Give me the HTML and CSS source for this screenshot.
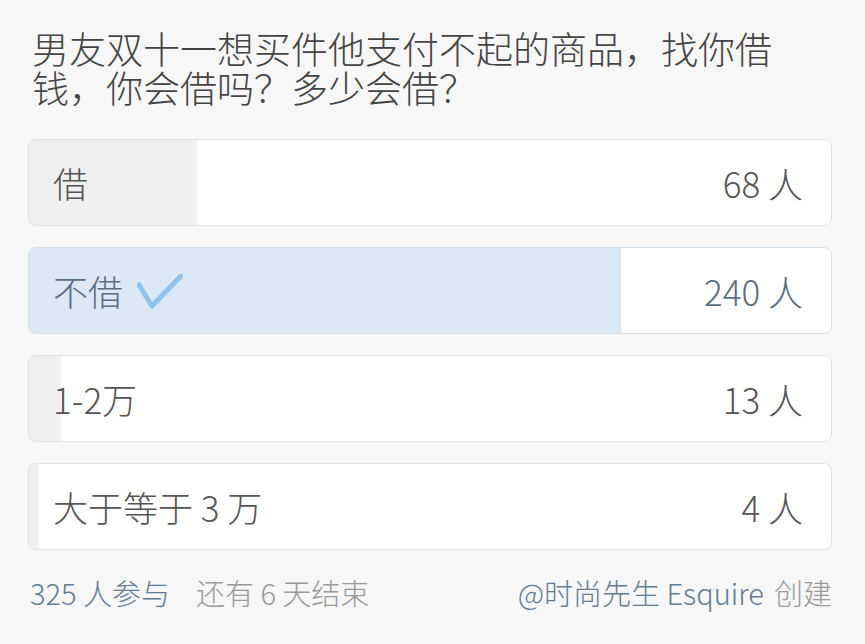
FILE: index.html
```html
<!DOCTYPE html>
<html lang="zh-CN">
  <head>
    <meta charset="UTF-8" />
    <meta name="viewport" content="width=device-width, initial-scale=1.0" />
    <title>投票</title>
    <link rel="stylesheet" href="styles.css">
  </head>
  <body>
    <div class="poll">
      <h1 class="poll-title">男友双十一想买件他支付不起的商品，找你借钱，你会借吗？多少会借？</h1>

      <div class="options">
        <div class="option" style="--pct: 20.9%">
          <span class="option-label">借</span>
          <span class="option-count">68 人</span>
        </div>
        <div class="option selected" style="--pct: 73.8%">
          <span class="option-label">不借
            <svg class="check" width="46" height="36" viewBox="0 0 46 36">
              <path d="M2 11 L15 32 L44 2" fill="none" stroke="#8fc2ee" stroke-width="5" stroke-linecap="round" stroke-linejoin="round" />
            </svg>
          </span>
          <span class="option-count">240 人</span>
        </div>
        <div class="option" style="--pct: 4%">
          <span class="option-label">1-2万</span>
          <span class="option-count">13 人</span>
        </div>
        <div class="option" style="--pct: 1.2%">
          <span class="option-label">大于等于 3 万</span>
          <span class="option-count">4 人</span>
        </div>
      </div>

      <div class="poll-footer">
        <div class="footer-left">
          <span class="blue">325 人参与</span>
          <span class="gray">还有 6 天结束</span>
        </div>
        <div class="footer-right">
          <span class="blue">@时尚先生 Esquire</span>
          <span class="gray">创建</span>
        </div>
      </div>
    </div>
  </body>
</html>
```

FILE: styles.css
```css
body {
  margin: 0;
  padding: 0;
  background-color: #f7f7f7;
  font-family: "Noto Sans CJK SC", "Noto Sans", sans-serif;
  font-weight: 300;
  color: #555;
}
.poll {
  width: 804px;
  margin-left: 28px;
  padding-top: 29px;
}
.poll-title {
  margin: 0 0 32px 4px;
  width: 760px;
  font-size: 37px;
  line-height: 39px;
  font-weight: 300;
  color: #444;
}
.options {
  display: flex;
  flex-direction: column;
  gap: 21px;
}
.option {
  --fill: #f0f0f0;
  box-sizing: border-box;
  height: 87px;
  display: flex;
  justify-content: space-between;
  align-items: center;
  padding: 0 28px 0 24px;
  border: 1px solid #e3e3e3;
  border-radius: 8px;
  background: linear-gradient(
    to right,
    var(--fill) var(--pct),
    #fff var(--pct)
  );
  font-size: 35px;
  color: #555;
}
.option.selected {
  --fill: #dce8f6;
  border-color: #d8e0e8;
  color: #5a6e82;
}
.option-label {
  display: flex;
  align-items: center;
  gap: 14px;
}
.check {
  margin-top: 2px;
}
.poll-footer {
  display: flex;
  justify-content: space-between;
  margin-top: 21px;
  font-size: 29px;
}
.footer-left,
.footer-right {
  display: flex;
  gap: 10px;
}
.footer-left {
  gap: 26px;
  margin-left: 2px;
}
.blue {
  color: #647d93;
}
.gray {
  color: #9a9a9a;
}
```
